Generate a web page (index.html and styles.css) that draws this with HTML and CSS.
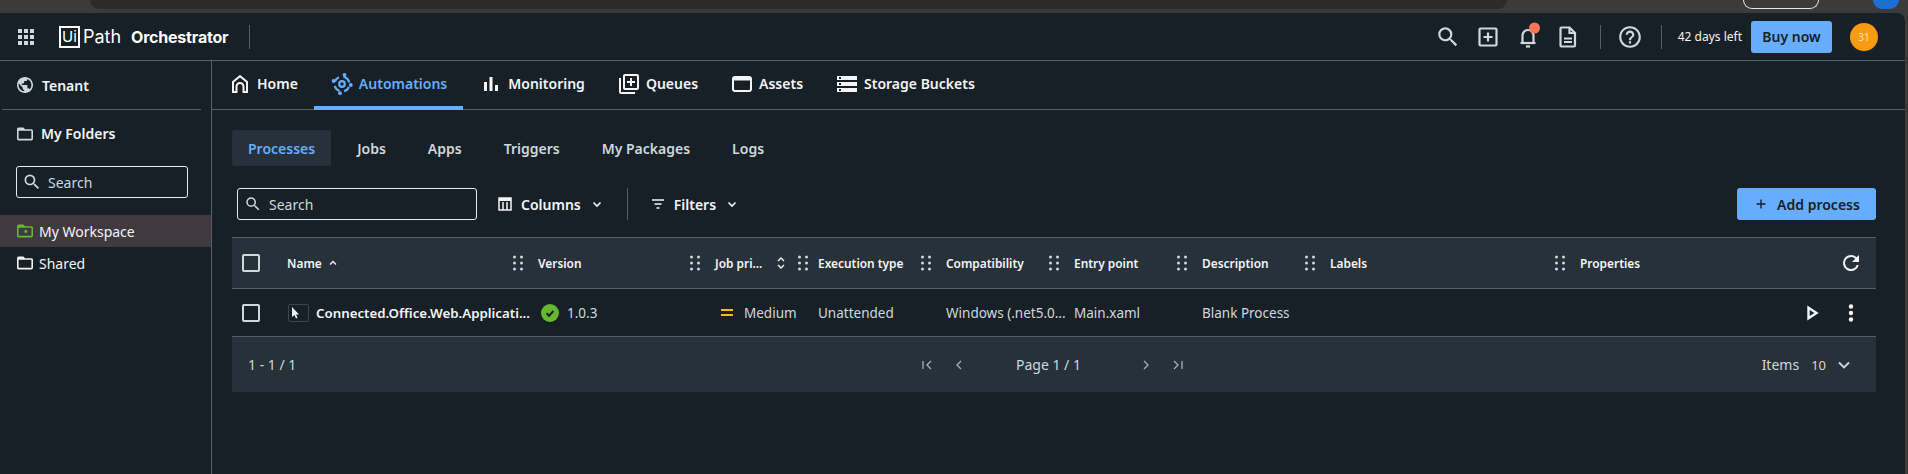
FILE: index.html
```html
<!DOCTYPE html>
<html>
<head>
	<meta charset="UTF-8">
	<title>Orchestrator</title>
	<link rel="stylesheet" href="styles.css">
</head>
<body>
	<!-- what is left of the browser toolbar -->
	<div class="browser-strip">
		<div class="address-bar"></div>
		<div class="profile-pill"></div>
		<div class="browser-ext"></div>
	</div>

	<div class="app">
		<header class="topbar">
			<svg class="apps-icon" width="16" height="16" viewBox="0 0 16 16" fill="#cfd8dd">
				<rect x="0" y="0" width="4" height="4"/><rect x="6" y="0" width="4" height="4"/><rect x="12" y="0" width="4" height="4"/>
				<rect x="0" y="6" width="4" height="4"/><rect x="6" y="6" width="4" height="4"/><rect x="12" y="6" width="4" height="4"/>
				<rect x="0" y="12" width="4" height="4"/><rect x="6" y="12" width="4" height="4"/><rect x="12" y="12" width="4" height="4"/>
			</svg>
			<div class="logo">
				<span class="logo-box">Ui</span>
				<span class="logo-path">Path</span>
				<span class="logo-product">Orchestrator</span>
			</div>
			<span class="bar-divider brand-divider"></span>

			<div class="topbar-right">
				<button class="icon-btn">
					<svg width="26" height="26" viewBox="0 0 24 24" fill="#cfd8dd"><path d="M15.500 14h-.79l-.28-.27A6.470 6.470 0 0 0 16 9.500 6.500 6.500 0 1 0 9.500 16c1.610 0 3.090-.59 4.230-1.570l.27.28v.79l5 4.990L20.490 19l-4.990-5zm-6 0C7.010 14 5 11.990 5 9.500S7.010 5 9.500 5 14 7.010 14 9.500 11.990 14 9.500 14z"/></svg>
				</button>
				<button class="icon-btn">
					<svg width="24" height="24" viewBox="0 0 24 24" fill="none" stroke="#cfd8dd" stroke-width="2.200"><rect x="3.500" y="3.500" width="17" height="17" rx="1"/><path d="M12 7.500v9M7.500 12h9"/></svg>
				</button>
				<button class="icon-btn">
					<svg class="bell" width="24" height="24" viewBox="0 0 24 24" fill="none" stroke="#cfd8dd" stroke-width="2.200"><path d="M6.500 18v-7.500a5.500 5.500 0 0 1 11 0V18"/><path d="M4.500 18h15"/><path d="M10 21.500h4"/><circle cx="18.500" cy="3" r="5.500" fill="#fa7659" stroke="none"/></svg>
				</button>
				<button class="icon-btn">
					<svg width="24" height="24" viewBox="0 0 24 24" fill="none" stroke="#cfd8dd" stroke-width="2.200"><path d="M5.500 2.500h8l5.500 5.500v12.500a1 1 0 0 1-1 1h-12.500a1 1 0 0 1-1-1v-17a1 1 0 0 1 1-1z"/><path d="M13.500 2.500V8H19"/><path d="M8 13.500h8M8 17h8"/></svg>
				</button>
				<span class="bar-divider divider-a"></span>
				<button class="icon-btn help-btn">
					<svg width="26" height="26" viewBox="0 0 24 24" fill="#cfd8dd"><path d="M11 18h2v-2h-2v2zm1-16C6.480 2 2 6.480 2 12s4.480 10 10 10 10-4.480 10-10S17.520 2 12 2zm0 18c-4.410 0-8-3.590-8-8s3.590-8 8-8 8 3.590 8 8-3.590 8-8 8zm0-14c-2.210 0-4 1.790-4 4h2c0-1.100.9-2 2-2s2 .9 2 2c0 2-3 1.750-3 5h2c0-2.250 3-2.500 3-5 0-2.210-1.790-4-4-4z"/></svg>
				</button>
				<span class="bar-divider divider-b"></span>
				<span class="trial-text">42 days left</span>
				<button class="primary-btn buy-btn">Buy now</button>
				<span class="avatar">31</span>
			</div>
		</header>

		<div class="layout">
			<aside class="sidebar">
				<div class="side-head tenant">
					<svg width="16" height="16" viewBox="2 2 20 20" fill="#cfd8dd"><path d="M12 2C6.480 2 2 6.480 2 12s4.480 10 10 10 10-4.480 10-10S17.520 2 12 2zm-1 17.930c-3.950-.49-7-3.850-7-7.930 0-.62.08-1.210.21-1.790L9 15v1c0 1.100.9 2 2 2v1.930zm6.900-2.540c-.26-.81-1-1.390-1.900-1.390h-1v-3c0-.55-.45-1-1-1H8v-2h2c.55 0 1-.45 1-1V7h2c1.100 0 2-.9 2-2v-.41c2.930 1.190 5 4.060 5 7.410 0 2.080-.8 3.970-2.100 5.390z"/></svg>
					<span>Tenant</span>
				</div>
				<div class="side-head folders">
					<svg width="16" height="16" viewBox="2 2 20 20" fill="#cfd8dd"><path d="M20 6h-8l-2-2H4c-1.100 0-1.990.9-1.990 2L2 18c0 1.100.9 2 2 2h16c1.100 0 2-.9 2-2V8c0-1.100-.9-2-2-2zm0 12H4V8h16v10z"/></svg>
					<span>My Folders</span>
				</div>
				<div class="search-box side-search">
					<svg width="20" height="20" viewBox="0 0 24 24" fill="#cfd8dd"><path d="M15.500 14h-.79l-.28-.27A6.470 6.470 0 0 0 16 9.500 6.500 6.500 0 1 0 9.500 16c1.610 0 3.090-.59 4.230-1.570l.27.28v.79l5 4.990L20.490 19l-4.990-5zm-6 0C7.010 14 5 11.990 5 9.500S7.010 5 9.500 5 14 7.010 14 9.500 11.990 14 9.500 14z"/></svg>
					<span>Search</span>
				</div>
				<div class="folder-row selected">
					<svg width="16" height="16" viewBox="2 2 20 20" fill="#66b82f"><path d="M20 6h-8l-2-2H4c-1.100 0-1.990.9-1.990 2L2 18c0 1.100.9 2 2 2h16c1.100 0 2-.9 2-2V8c0-1.100-.9-2-2-2zm0 12H4V8h16v10z"/><path d="M13 9.500l.8 1.900 2 .2-1.500 1.300.5 2-1.800-1.100-1.800 1.100.5-2-1.500-1.300 2-.2z"/></svg>
					<span>My Workspace</span>
				</div>
				<div class="folder-row">
					<svg width="16" height="16" viewBox="2 2 20 20" fill="#f4f5f7"><path d="M20 6h-8l-2-2H4c-1.100 0-1.990.9-1.990 2L2 18c0 1.100.9 2 2 2h16c1.100 0 2-.9 2-2V8c0-1.100-.9-2-2-2zm0 12H4V8h16v10z"/></svg>
					<span>Shared</span>
				</div>
			</aside>

			<main class="content">
				<nav class="main-tabs">
					<a class="main-tab">
						<svg width="24" height="24" viewBox="0 0 24 24" fill="none" stroke="#f4f5f7" stroke-width="2"><path d="M5 20V10l7-6 7 6v10h-3.500v-5.500a3.500 3.500 0 0 0-7 0V20z"/></svg>
						Home
					</a>
					<a class="main-tab active">
						<svg width="24" height="24" viewBox="0 0 24 24" fill="none" stroke="#66adff" stroke-width="2.200"><circle cx="12" cy="12" r="2.800"/><path d="M13.500 4.800a7.400 7.400 0 0 1 5.700 5.600M19 15a7.400 7.400 0 0 1-4.800 4.100M9.500 19a7.400 7.400 0 0 1-4.800-5M4.900 9.500a7.400 7.400 0 0 1 4-4.200"/><circle cx="14.500" cy="2.800" r="1.900" fill="#66adff" stroke="none"/><circle cx="3.600" cy="9" r="1.900" fill="#66adff" stroke="none"/><circle cx="20.800" cy="13" r="1.900" fill="#66adff" stroke="none"/><circle cx="10" cy="21.200" r="1.900" fill="#66adff" stroke="none"/></svg>
						Automations
					</a>
					<a class="main-tab">
						<svg width="24" height="24" viewBox="0 0 24 24" fill="#f4f5f7"><rect x="5" y="10" width="3" height="9"/><rect x="10.500" y="5" width="3" height="14"/><rect x="16" y="13" width="3" height="6"/></svg>
						Monitoring
					</a>
					<a class="main-tab">
						<svg width="24" height="24" viewBox="0 0 24 24" fill="#f4f5f7"><path d="M4 6H2v14c0 1.100.9 2 2 2h14v-2H4V6zm16-4H8c-1.100 0-2 .9-2 2v12c0 1.100.9 2 2 2h12c1.100 0 2-.9 2-2V4c0-1.100-.9-2-2-2zm0 14H8V4h12v12zm-7-2h2v-3h3V9h-3V6h-2v3h-3v2h3z"/></svg>
						Queues
					</a>
					<a class="main-tab">
						<svg width="24" height="24" viewBox="0 0 24 24" fill="none" stroke="#f4f5f7" stroke-width="2"><rect x="3" y="5" width="18" height="14" rx="2"/><path d="M3 7h18" stroke-width="3"/></svg>
						Assets
					</a>
					<a class="main-tab">
						<svg width="24" height="24" viewBox="0 0 24 24" fill="#f4f5f7"><path d="M2 20h20v-4H2v4zm2-3h2v2H4v-2zM2 4v4h20V4H2zm4 3H4V5h2v2zm-4 7h20v-4H2v4zm2-3h2v2H4v-2z"/></svg>
						Storage Buckets
					</a>
				</nav>

				<div class="page">
					<div class="sub-tabs">
						<a class="sub-tab active">Processes</a>
						<a class="sub-tab">Jobs</a>
						<a class="sub-tab">Apps</a>
						<a class="sub-tab">Triggers</a>
						<a class="sub-tab">My Packages</a>
						<a class="sub-tab">Logs</a>
					</div>

					<div class="toolbar">
						<div class="search-box table-search">
							<svg width="18" height="18" viewBox="0 0 24 24" fill="#cfd8dd"><path d="M15.500 14h-.79l-.28-.27A6.470 6.470 0 0 0 16 9.500 6.500 6.500 0 1 0 9.500 16c1.610 0 3.090-.59 4.230-1.570l.27.28v.79l5 4.990L20.490 19l-4.990-5zm-6 0C7.010 14 5 11.990 5 9.500S7.010 5 9.500 5 14 7.010 14 9.500 11.990 14 9.500 14z"/></svg>
							<span>Search</span>
						</div>
						<button class="tool-btn columns-btn">
							<svg width="16" height="16" viewBox="0 0 16 16" fill="none" stroke="#f4f5f7" stroke-width="1.500"><rect x="2" y="2" width="12" height="12"/><path d="M2 3.500h12" stroke-width="3"/><path d="M6 6v8M10 6v8"/></svg>
							Columns
							<svg class="chev" width="12" height="12" viewBox="0 0 12 12" fill="none" stroke="#f4f5f7" stroke-width="1.600"><path d="M2.500 4.500L6 8l3.500-3.500"/></svg>
						</button>
						<span class="tool-divider"></span>
						<button class="tool-btn filters-btn">
							<svg width="16" height="16" viewBox="0 0 16 16" fill="none" stroke="#f4f5f7" stroke-width="1.500"><path d="M2 4h12M4.500 8h7M6.500 12h3"/></svg>
							Filters
							<svg class="chev" width="12" height="12" viewBox="0 0 12 12" fill="none" stroke="#f4f5f7" stroke-width="1.600"><path d="M2.500 4.500L6 8l3.500-3.500"/></svg>
						</button>
						<button class="primary-btn add-btn">
							<svg width="16" height="16" viewBox="0 0 16 16" fill="none" stroke="#182027" stroke-width="1.400"><path d="M8 3.500v9M3.500 8h9"/></svg>
							Add process
						</button>
					</div>

					<div class="grid-table">
						<div class="grid-row head-row">
							<div class="cell check-cell"><span class="checkbox"></span></div>
							<div class="cell head-cell"><span>Name<svg class="sort-up" width="10" height="10" viewBox="0 0 10 10" fill="none" stroke="#f4f5f7" stroke-width="1.400"><path d="M2 6.500L5 3.500l3 3"/></svg></span><svg class="grip" width="10" height="16"><use href="#grip"/></svg></div>
							<div class="cell head-cell"><span>Version</span><svg class="grip" width="10" height="16"><use href="#grip"/></svg></div>
							<div class="cell head-cell job-head"><span>Job pri...</span><svg class="sort-both" width="10" height="14" viewBox="0 0 10 14" fill="none" stroke="#f4f5f7" stroke-width="1.400"><path d="M2 5l3-3 3 3M2 9l3 3 3-3"/></svg><svg class="grip" width="10" height="16"><use href="#grip"/></svg></div>
							<div class="cell head-cell"><span>Execution type</span><svg class="grip" width="10" height="16"><use href="#grip"/></svg></div>
							<div class="cell head-cell"><span>Compatibility</span><svg class="grip" width="10" height="16"><use href="#grip"/></svg></div>
							<div class="cell head-cell"><span>Entry point</span><svg class="grip" width="10" height="16"><use href="#grip"/></svg></div>
							<div class="cell head-cell"><span>Description</span><svg class="grip" width="10" height="16"><use href="#grip"/></svg></div>
							<div class="cell head-cell"><span>Labels</span><svg class="grip" width="10" height="16"><use href="#grip"/></svg></div>
							<div class="cell head-cell last-cell">
								<span>Properties</span>
								<svg width="24" height="24" viewBox="0 0 24 24" fill="#f4f5f7"><path d="M17.650 6.350A7.960 7.960 0 0 0 12 4a8 8 0 1 0 7.730 10h-2.080A6 6 0 1 1 12 6c1.660 0 3.140.69 4.220 1.780L13 11h7V4l-2.350 2.350z"/></svg>
							</div>
						</div>

						<div class="grid-row body-row">
							<div class="cell check-cell"><span class="checkbox"></span></div>
							<div class="cell name-cell">
								<span class="proc-icon"><svg width="10" height="12" viewBox="0 0 10 12" fill="#f4f5f7"><path d="M1 0v10l2.500-2 1.500 3.500 1.500-.7L5 7.500h3z"/></svg></span>
								<span class="proc-name">Connected.Office.Web.Applicati...</span>
							</div>
							<div class="cell version-cell">
								<svg width="18" height="18" viewBox="0 0 18 18"><circle cx="9" cy="9" r="9" fill="#66b82f"/><path d="M5.500 9.200l2.500 2.500 4.500-4.700" fill="none" stroke="#182027" stroke-width="2"/></svg>
								<span>1.0.3</span>
							</div>
							<div class="cell priority-cell"><span class="medium-mark"></span><span>Medium</span></div>
							<div class="cell">Unattended</div>
							<div class="cell">Windows (.net5.0...</div>
							<div class="cell">Main.xaml</div>
							<div class="cell">Blank Process</div>
							<div class="cell"></div>
							<div class="cell row-actions">
								<svg width="24" height="24" viewBox="0 0 24 24" fill="none" stroke="#f4f5f7" stroke-width="2.400"><path d="M8.500 6.800v10.400l8-5.200z"/></svg>
								<svg width="24" height="24" viewBox="0 0 24 24" fill="#f4f5f7"><circle cx="12" cy="5.500" r="2.200"/><circle cx="12" cy="12" r="2.200"/><circle cx="12" cy="18.500" r="2.200"/></svg>
							</div>
						</div>

						<div class="table-footer">
							<span class="range">1 - 1 / 1</span>
							<div class="pager">
								<svg width="20" height="20" viewBox="0 0 20 20" fill="none" stroke="#a4b1b8" stroke-width="1.300"><path d="M6 6v8M14 6l-4 4 4 4"/></svg>
								<svg width="20" height="20" viewBox="0 0 20 20" fill="none" stroke="#a4b1b8" stroke-width="1.300"><path d="M12 6l-4 4 4 4"/></svg>
								<span class="page-label">Page 1 / 1</span>
								<svg width="20" height="20" viewBox="0 0 20 20" fill="none" stroke="#a4b1b8" stroke-width="1.300"><path d="M8 6l4 4-4 4"/></svg>
								<svg width="20" height="20" viewBox="0 0 20 20" fill="none" stroke="#a4b1b8" stroke-width="1.300"><path d="M14 6v8M6 6l4 4-4 4"/></svg>
							</div>
							<div class="page-size">
								<span>Items</span>
								<span class="size-value">10</span>
								<svg width="16" height="16" viewBox="0 0 16 16" fill="none" stroke="#cfd8dd" stroke-width="1.800"><path d="M3 5.500L8 10.500l5-5"/></svg>
							</div>
						</div>
					</div>
				</div>
			</main>
		</div>
	</div>

	<svg class="defs" width="0" height="0">
		<symbol id="grip" viewBox="0 0 10 16">
			<g fill="#cfd8dd">
				<circle cx="1.500" cy="2" r="1.500"/><circle cx="8.500" cy="2" r="1.500"/>
				<circle cx="1.500" cy="8" r="1.500"/><circle cx="8.500" cy="8" r="1.500"/>
				<circle cx="1.500" cy="14" r="1.500"/><circle cx="8.500" cy="14" r="1.500"/>
			</g>
		</symbol>
	</svg>
</body>
</html>
```

FILE: styles.css
```css
* {
	box-sizing: border-box;
}

body {
	margin: 0;
	height: 100vh;
	overflow: hidden;
	background: #3b3b3b;
	font-family: "Noto Sans", sans-serif;
	font-size: 14px;
	color: #f4f5f7;
	display: flex;
	flex-direction: column;
}

button {
	font-family: inherit;
	border: 0;
	padding: 0;
	background: none;
	color: inherit;
}

.defs {
	display: block;
	height: 0;
}

/* browser toolbar */
.browser-strip {
	height: 13px;
	flex: none;
	display: flex;
	align-items: flex-start;
}

.address-bar {
	width: 1417px;
	height: 9px;
	margin-left: 90px;
	background: #2b2b2b;
	border-radius: 0 0 12px 12px;
}

.profile-pill {
	width: 76px;
	height: 9px;
	margin-left: 236px;
	border: 1px solid #e6e6e6;
	border-top: 0;
	border-radius: 0 0 14px 14px;
}

.browser-ext {
	width: 26px;
	height: 9px;
	margin-left: 54px;
	background: #1f6fd0;
	border-radius: 0 0 12px 12px;
}

.app {
	flex: 1;
	width: 1905px;
	min-height: 0;
	background: #182027;
	border-radius: 0 8px 0 0;
	display: flex;
	flex-direction: column;
}

/* top bar */
.topbar {
	height: 48px;
	flex: none;
	display: flex;
	align-items: center;
	padding-left: 18px;
	border-bottom: 1px solid #526069;
}

.apps-icon {
	flex: none;
}

.logo {
	display: flex;
	align-items: center;
	margin-left: 25px;
}

.logo-box {
	width: 21px;
	height: 22px;
	border: 2px solid #fff;
	font-family: "Inter", sans-serif;
	font-size: 15px;
	line-height: 18px;
	text-align: center;
	color: #fff;
}

.logo-path {
	margin-left: 3px;
	width: 48px;
	font-family: "Inter", sans-serif;
	font-size: 18px;
	color: #fff;
}

.logo-product {
	font-family: "Inter", sans-serif;
	font-size: 16px;
	font-weight: 700;
	letter-spacing: -0.2px;
	color: #fff;
}

.bar-divider {
	width: 1px;
	height: 24px;
	background: #526069;
	flex: none;
}

.brand-divider {
	margin-left: 21px;
}

.topbar-right {
	margin-left: auto;
	display: flex;
	align-items: center;
	padding-right: 27px;
}

.icon-btn {
	width: 40px;
	height: 40px;
	display: flex;
	align-items: center;
	justify-content: center;
}

.bell {
	overflow: visible;
}

.divider-a {
	margin-left: 12px;
	margin-right: 9px;
}

.divider-b {
	margin-left: 11px;
}

.trial-text {
	margin-left: 16px;
	font-size: 12px;
	white-space: nowrap;
}

.primary-btn {
	background: #66adff;
	color: #182027;
	font-weight: 600;
	border-radius: 3px;
}

.buy-btn {
	width: 81px;
	height: 32px;
	margin-left: 9px;
	font-size: 14px;
}

.avatar {
	width: 28px;
	height: 28px;
	margin-left: 18px;
	border-radius: 50%;
	background: #f79b13;
	color: #fde3b8;
	font-size: 10px;
	display: flex;
	align-items: center;
	justify-content: center;
}

.layout {
	flex: 1;
	display: flex;
	min-height: 0;
}

/* left side */
.sidebar {
	width: 212px;
	flex: none;
	border-right: 1px solid #526069;
}

.side-head {
	display: flex;
	align-items: center;
	gap: 9px;
	padding-left: 17px;
	font-weight: 600;
}

.tenant {
	height: 49px;
	margin: 0 10px 0 2px;
	padding-left: 15px;
	border-bottom: 1px solid #526069;
}

.folders {
	height: 47px;
	gap: 8px;
}

.search-box {
	display: flex;
	align-items: center;
	height: 32px;
	border: 1px solid #e6eaed;
	border-radius: 3px;
	color: #cfd8dd;
}

.side-search {
	width: 172px;
	margin: 9px 0 17px 16px;
	padding-left: 5px;
	gap: 6px;
}

.folder-row {
	height: 32px;
	display: flex;
	align-items: center;
	gap: 6px;
	padding-left: 17px;
}

.selected {
	background: #403a3e;
}

/* main tabs */
.content {
	flex: 1;
	min-width: 0;
}

.main-tabs {
	height: 49px;
	display: flex;
	border-bottom: 1px solid #526069;
}

.main-tab {
	display: flex;
	align-items: center;
	gap: 5px;
	padding: 0 16px;
	font-weight: 600;
	margin-bottom: -1px;
	border-bottom: 4px solid transparent;
}

.main-tab.active {
	color: #66adff;
	border-bottom-color: #66adff;
}

.page {
	padding: 20px 29px 0 20px;
}

.sub-tabs {
	display: flex;
	gap: 10px;
}

.sub-tab {
	height: 36px;
	padding: 0 16px;
	display: flex;
	align-items: center;
	font-weight: 600;
	color: #cfd8dd;
	border-radius: 3px;
}

.sub-tab.active {
	background: #273139;
	color: #66adff;
}

/* search and filters */
.toolbar {
	display: flex;
	align-items: center;
	height: 32px;
	margin-top: 22px;
	padding-left: 5px;
}

.table-search {
	width: 240px;
	padding-left: 6px;
	gap: 7px;
}

.tool-btn {
	display: flex;
	align-items: center;
	height: 32px;
	font-size: 14px;
	font-weight: 600;
	gap: 8px;
}

.columns-btn {
	margin-left: 20px;
}

.chev {
	margin-left: 2px;
}

.tool-divider {
	width: 1px;
	height: 32px;
	background: #526069;
	margin-left: 24px;
}

.filters-btn {
	margin-left: 22px;
}

.add-btn {
	margin-left: auto;
	width: 139px;
	height: 32px;
	display: flex;
	align-items: center;
	justify-content: center;
	gap: 8px;
	font-size: 14px;
}

/* table */
.grid-table {
	margin-top: 17px;
}

.grid-row {
	display: grid;
	grid-template-columns: 55px 251px 177px 103px 128px 128px 128px 128px 250px 1fr;
	border-bottom: 1px solid #526069;
}

.head-row {
	height: 52px;
	background: #273139;
	border-top: 1px solid #526069;
	font-size: 11.9px;
	font-weight: 600;
}

.body-row {
	height: 48px;
	color: #cfd8dd;
	font-size: 13.5px;
}

.cell {
	display: flex;
	align-items: center;
	min-width: 0;
	white-space: nowrap;
}

.check-cell {
	padding-left: 10px;
}

.checkbox {
	width: 18px;
	height: 18px;
	border: 2px solid #cfd8dd;
	border-radius: 2px;
}

.head-cell {
	justify-content: space-between;
	padding-right: 15px;
}

.head-cell > span {
	display: flex;
	align-items: center;
}

.sort-up {
	margin-left: 6px;
}

.job-head {
	padding-right: 10px;
}

.sort-both {
	margin-left: auto;
	margin-right: 12px;
}

.last-cell {
	padding-right: 13px;
}

.name-cell {
	padding-left: 1px;
	gap: 7px;
}

.proc-icon {
	flex: none;
	width: 21px;
	height: 18px;
	border: 1px solid #374652;
	border-radius: 2px;
	padding-left: 2px;
	display: flex;
	align-items: center;
}

.proc-name {
	color: #f4f5f7;
	font-weight: 600;
	font-size: 13.3px;
}

.version-cell {
	padding-left: 3px;
	gap: 8px;
}

.priority-cell {
	padding-left: 6px;
	gap: 11px;
}

.medium-mark {
	width: 12px;
	height: 7px;
	border-top: 2px solid #fbb81f;
	border-bottom: 2px solid #fbb81f;
}

.row-actions {
	justify-content: flex-end;
	gap: 15px;
	padding-right: 13px;
}

.table-footer {
	height: 55px;
	background: #273139;
	color: #cfd8dd;
	display: grid;
	grid-template-columns: 1fr auto 1fr;
	align-items: center;
	padding: 0 16px;
}

.pager {
	display: flex;
	align-items: center;
	gap: 12px;
	padding-right: 3px;
}

.page-label {
	margin: 0 43px 0 35px;
	color: #cfd8dd;
}

.page-size {
	display: flex;
	align-items: center;
	justify-content: flex-end;
	padding-right: 8px;
}

.size-value {
	font-size: 13px;
	margin: 0 10px 0 12px;
}
```
